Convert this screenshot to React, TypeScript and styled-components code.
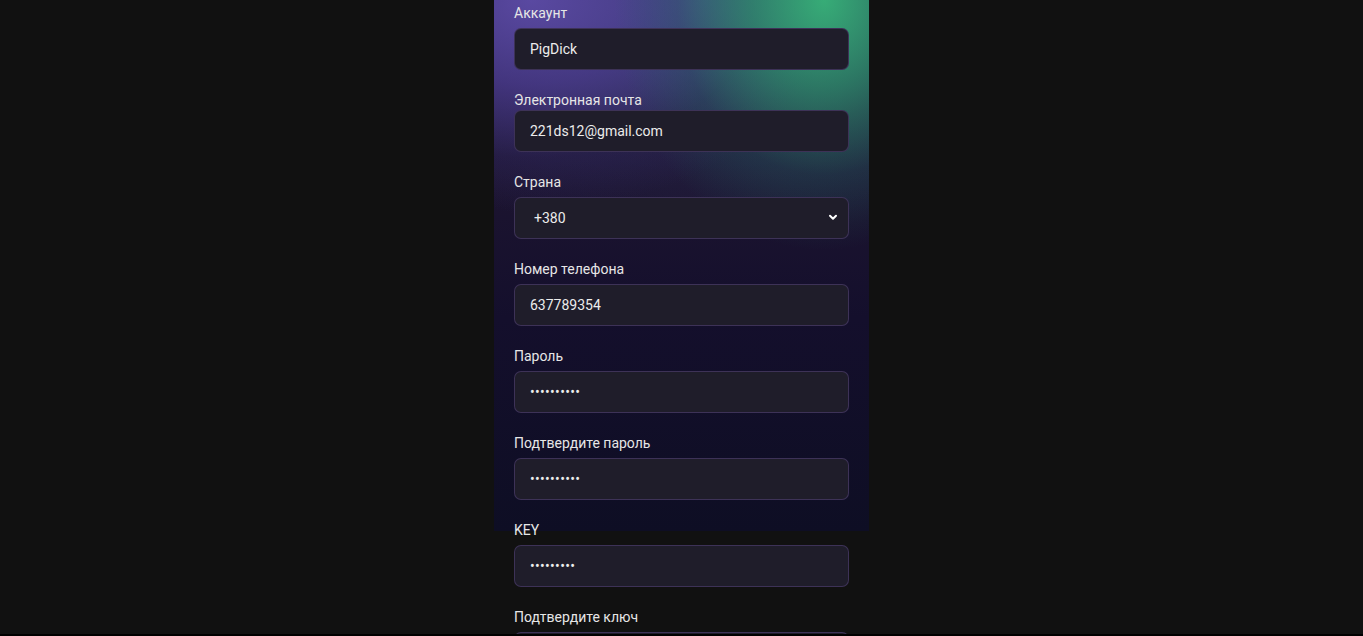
import React from "react";
import styled, { createGlobalStyle } from "styled-components";

const Global = createGlobalStyle`
  html, body { margin: 0; padding: 0; background: #111111; }
  body { font-family: Roboto, "Liberation Sans", Arial, sans-serif; overflow: hidden; }
  * { box-sizing: border-box; }
`;

const Page = styled.div`
  display: flex;
  justify-content: center;
  min-height: 100vh;
  background: #111111;
`;

const Panel = styled.div`
  width: 375px;
  height: 531px;
  background:
    radial-gradient(ellipse 210px 250px at 88% 0%, rgba(55, 178, 120, 0.95) 0%, rgba(45, 150, 108, 0.7) 35%, rgba(35, 100, 95, 0.3) 70%, rgba(30, 60, 80, 0) 100%),
    radial-gradient(ellipse 300px 210px at 10% 0%, rgba(92, 74, 165, 0.95) 0%, rgba(78, 60, 148, 0.72) 40%, rgba(55, 40, 110, 0.25) 75%, rgba(40, 30, 80, 0) 100%),
    radial-gradient(ellipse 420px 240px at 55% 0%, rgba(70, 100, 140, 0.8) 0%, rgba(45, 50, 90, 0.35) 60%, rgba(40, 40, 80, 0) 100%),
    linear-gradient(180deg, #241a3c 0%, #1c1430 35%, #140f2c 60%, #0e0e24 100%);
`;

const Form = styled.form`
  display: flex;
  flex-direction: column;
  padding: 3px 20px 0;
`;

const Field = styled.div<{ $tight?: boolean }>`
  display: flex;
  flex-direction: column;
  margin-bottom: 20px;
  & > label {
    margin-bottom: ${(p) => (p.$tight ? "0px" : "5px")};
  }
`;

const Label = styled.label`
  display: block;
  font-size: 14px;
  line-height: 20px;
  color: #e6e6e6;
`;

const Input = styled.input`
  width: 335px;
  height: 42px;
  border-radius: 7px;
  border: 1px solid rgba(110, 85, 160, 0.38);
  background: #1f1d2a;
  color: #ececec;
  font-family: Roboto, "Liberation Sans", Arial, sans-serif;
  font-size: 14px;
  padding: 0 15px;
  outline: none;
  &[type="password"] {
    letter-spacing: 0.3px;
  }
`;

const SelectWrap = styled.div`
  position: relative;
  width: 335px;
`;

const Select = styled.select`
  width: 335px;
  height: 42px;
  border-radius: 7px;
  border: 1px solid rgba(110, 85, 160, 0.38);
  background: #1f1d2a;
  color: #ececec;
  font-family: Roboto, "Liberation Sans", Arial, sans-serif;
  font-size: 14px;
  padding: 0 15px 0 19px;
  appearance: none;
  outline: none;
`;

const Chevron = styled.svg`
  position: absolute;
  right: 11px;
  top: 17px;
  pointer-events: none;
`;

const BottomBar = styled.div`
  position: fixed;
  left: 0;
  right: 0;
  bottom: 0;
  height: 2px;
  background: #000;
`;

export default function App() {
  return (
    <>
      <Global />
      <Page>
        <Panel>
          <Form onSubmit={(e) => e.preventDefault()}>
            <Field>
              <Label>Аккаунт</Label>
              <Input readOnly defaultValue="PigDick" />
            </Field>
            <Field $tight>
              <Label>Электронная почта</Label>
              <Input readOnly defaultValue="221ds12@gmail.com" />
            </Field>
            <Field>
              <Label>Страна</Label>
              <SelectWrap>
                <Select defaultValue="+380">
                  <option value="+380">+380</option>
                </Select>
                <Chevron width="10" height="7" viewBox="0 0 10 7">
                  <path d="M2 1.8 L5 4.8 L8 1.8" fill="none" stroke="#ffffff" strokeWidth="2" strokeLinecap="round" strokeLinejoin="round" />
                </Chevron>
              </SelectWrap>
            </Field>
            <Field>
              <Label>Номер телефона</Label>
              <Input readOnly defaultValue="637789354" />
            </Field>
            <Field>
              <Label>Пароль</Label>
              <Input type="password" readOnly defaultValue="1234567890" />
            </Field>
            <Field>
              <Label>Подтвердите пароль</Label>
              <Input type="password" readOnly defaultValue="1234567890" />
            </Field>
            <Field>
              <Label>KEY</Label>
              <Input type="password" readOnly defaultValue="123456789" />
            </Field>
            <Field>
              <Label>Подтвердите ключ</Label>
              <Input type="password" readOnly defaultValue="123456789" />
            </Field>
          </Form>
        </Panel>
      </Page>
      <BottomBar />
    </>
  );
}
